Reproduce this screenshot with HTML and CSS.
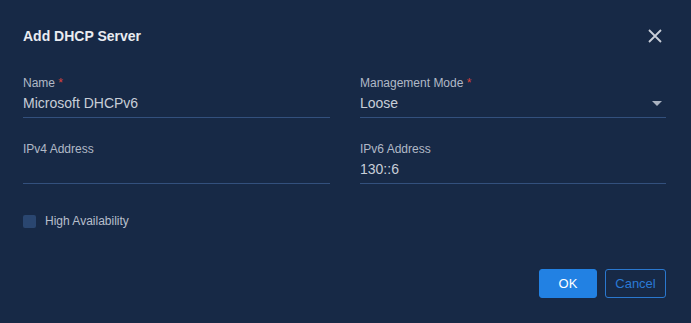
FILE: index.html
```html
<!DOCTYPE html>
<html>
<head>
    <meta name="viewport" content="width=device-width, initial-scale=1">
    <link rel="stylesheet" href="styles.css">
</head>
<body>
    <div class="dialog">
        <div class="dialog-header">
            <h2>Add DHCP Server</h2>
            <button class="close" aria-label="Close">
                <svg width="14" height="14" viewBox="0 0 14 14">
                    <path d="M1 1 L13 13 M13 1 L1 13" stroke="#c9ced8" stroke-width="1.8" fill="none"/>
                </svg>
            </button>
        </div>

        <div class="form-grid">
            <div class="field">
                <label>Name <span class="req">*</span></label>
                <div class="input">Microsoft DHCPv6</div>
            </div>
            <div class="field">
                <label>Management Mode <span class="req">*</span></label>
                <div class="input select">
                    <span>Loose</span>
                    <span class="caret"></span>
                </div>
            </div>
            <div class="field">
                <label>IPv4 Address</label>
                <div class="input"></div>
            </div>
            <div class="field">
                <label>IPv6 Address</label>
                <div class="input">130::6</div>
            </div>
        </div>

        <div class="check">
            <span class="box"></span>
            <span>High Availability</span>
        </div>

        <div class="actions">
            <button class="btn btn-primary">OK</button>
            <button class="btn btn-outline">Cancel</button>
        </div>
    </div>
</body>
</html>
```

FILE: styles.css
```css
body {
    margin: 0;
    padding: 0;
    background-color: #172946;
    font-family: "Liberation Sans", Arial, sans-serif;
}

.dialog {
    width: 691px;
    height: 323px;
    box-sizing: border-box;
    padding: 26px 25px 25px 23px;
    display: flex;
    flex-direction: column;
}

.dialog-header {
    display: flex;
    justify-content: space-between;
    align-items: center;
    height: 20px;
}

.dialog-header h2 {
    margin: 0;
    font-size: 14px;
    line-height: 20px;
    font-weight: bold;
    color: #e9ecf1;
}

.close {
    background: none;
    border: 0;
    padding: 0;
    margin-right: 4px;
    width: 14px;
    height: 14px;
    display: flex;
}

.form-grid {
    margin-top: 29px;
    display: grid;
    grid-template-columns: 307px 306px;
    column-gap: 30px;
    row-gap: 23px;
}

.field label {
    display: block;
    font-size: 12px;
    line-height: 16px;
    color: #b1b9c7;
}

.req {
    color: #d9423b;
}

.input {
    height: 20px;
    padding: 2px 0 4px;
    font-size: 14px;
    line-height: 20px;
    color: #c8ced8;
    border-bottom: 1px solid #33507d;
}

.select {
    display: flex;
    justify-content: space-between;
    align-items: center;
}

.caret {
    width: 0;
    height: 0;
    margin-right: 4px;
    border-left: 5px solid transparent;
    border-right: 5px solid transparent;
    border-top: 5px solid #aab2c0;
}

.check {
    margin-top: 30px;
    display: flex;
    align-items: center;
    gap: 9px;
    font-size: 12px;
    color: #b8bfcc;
}

.check .box {
    width: 13px;
    height: 13px;
    border-radius: 2px;
    background-color: #2a4670;
}

.actions {
    margin-top: auto;
    display: flex;
    justify-content: flex-end;
    gap: 8px;
}

.btn {
    height: 29px;
    border-radius: 3px;
    font-family: "Liberation Sans", Arial, sans-serif;
    font-size: 13px;
    padding: 0;
}

.btn-primary {
    width: 58px;
    background-color: #2281e3;
    border: 1px solid #2281e3;
    color: #ffffff;
}

.btn-outline {
    width: 61px;
    background: transparent;
    border: 1px solid #2a78cf;
    color: #2a7ad6;
}
```
